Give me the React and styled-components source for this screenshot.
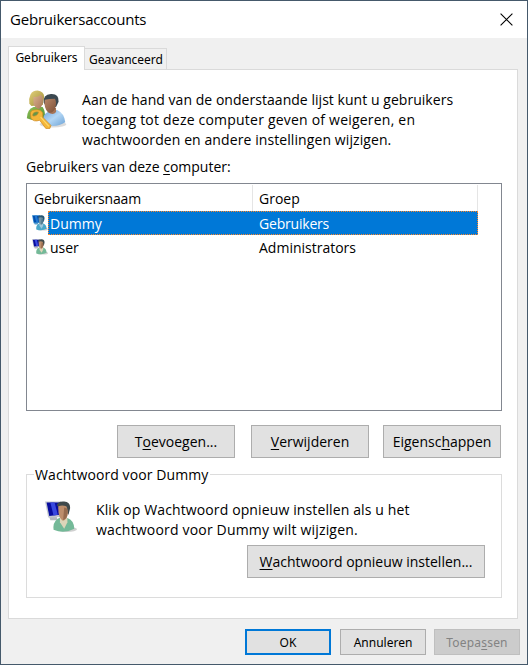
import React from "react";
import styled, { createGlobalStyle } from "styled-components";

const GlobalStyle = createGlobalStyle`
  * { box-sizing: border-box; }
  html, body { margin: 0; padding: 0; }
  body {
    background: #f0f0f0;
    color: #000;
    font-family: "Open Sans", "Noto Sans", sans-serif;
    font-size: 14px;
    line-height: 20px;
  }
  u { text-decoration: underline; text-decoration-thickness: 1px; text-underline-offset: 2px; text-decoration-skip-ink: none; }
`;

const Dialog = styled.main`
  width: 528px;
  height: 665px;
  border: 1px solid #45596b;
  background: #f0f0f0;
  display: flex;
  flex-direction: column;
`;

const TitleBar = styled.header`
  height: 37px;
  flex: none;
  background: #fff;
  display: flex;
  align-items: center;
  justify-content: space-between;
  padding: 0 14px 0 9px;
`;

const Title = styled.h1`
  margin: 0;
  padding-bottom: 2px;
  font-size: 15px;
  font-weight: 400;
  line-height: 20px;
  letter-spacing: -0.2px;
`;

const Text = styled.span`
  white-space: nowrap;
  letter-spacing: ${(p) => p.$track || 0}px;
`;

const CloseButton = styled.button`
  border: 0;
  padding: 0;
  background: none;
  width: 13px;
  height: 13px;
  display: flex;
`;

const TabStrip = styled.nav`
  height: 31px;
  flex: none;
  padding-left: 7px;
  display: flex;
  align-items: flex-end;
`;

const Tab = styled.button`
  font: 12px/18px "Noto Sans", sans-serif;
  color: #000;
  padding: ${(p) => (p.$active ? "0 0 2px" : "1px 0 0 1px")};
  border: 1px solid #dadada;
  border-bottom: 0;
  width: ${(p) => p.$width}px;
  height: ${(p) => (p.$active ? 24 : 21)}px;
  background: ${(p) => (p.$active ? "#fff" : "#f0f0f0")};
  margin-bottom: ${(p) => (p.$active ? -1 : 0)}px;
  margin-left: ${(p) => (p.$active ? 0 : -1)}px;
  position: relative;
  z-index: ${(p) => (p.$active ? 1 : 0)};
`;

const Pane = styled.section`
  margin-left: 7px;
  width: 510px;
  height: 550px;
  flex: none;
  border: 1px solid #dadada;
  background: #fff;
  padding: 20px 15px 0 17px;
  display: flex;
  flex-direction: column;
`;

const Intro = styled.div`
  display: flex;
  height: 67px;
`;

const IntroIcon = styled.div`
  width: 56px;
  flex: none;
  svg { display: block; }
`;

const Lines = styled.p`
  margin: 0;
  display: flex;
  flex-direction: column;
`;

const ListLabel = styled.label`
  height: 26px;
`;

const UserList = styled.div`
  height: 228px;
  flex: none;
  border: 1px solid #828790;
  display: flex;
  flex-direction: column;
`;

const ListHeader = styled.div`
  display: grid;
  grid-template-columns: 226px 225px;
  height: 27px;
  padding-top: 1px;
`;

const HeaderCell = styled.div`
  border-right: 1px solid #e5e5e5;
  padding: 4px 0 0 ${(p) => p.$indent}px;
`;

const Row = styled.div`
  display: flex;
  height: 24px;
  width: 451px;
`;

const RowIcon = styled.div`
  width: 21px;
  padding: 4px 0 0 5px;
  flex: none;
  svg { display: block; }
`;

const RowBody = styled.div`
  flex: 1;
  display: grid;
  grid-template-columns: 209px 1fr;
  padding: 2px 0 0 1px;
  line-height: 20px;
  border: 1px ${(p) => (p.$selected ? "dotted #ff8728" : "solid transparent")};
  background: ${(p) => (p.$selected ? "#0078d7" : "transparent")};
  color: ${(p) => (p.$selected ? "#fff" : "#000")};
`;

const ListActions = styled.div`
  display: flex;
  justify-content: flex-end;
  padding: 14px 1px 0 0;
  height: 54px;
  button + button { margin-left: 16px; }
  button:last-child { margin-left: 14px; }
`;

const Button = styled.button`
  font: ${(p) => (p.$small ? '12px "Noto Sans"' : '14px "Open Sans"')}, sans-serif;
  line-height: 20px;
  width: ${(p) => p.$width}px;
  height: ${(p) => (p.$small ? 26 : 33)}px;
  padding: ${(p) => (p.$small ? "1px 0 0" : "0")};
  flex: none;
  color: ${(p) => (p.disabled ? "#838383" : "#000")};
  background: ${(p) => (p.disabled ? "#cccccc" : "#e1e1e1")};
  border: ${(p) => (p.$primary ? "2px solid #0078d7" : p.disabled ? "1px solid #bfbfbf" : "1px solid #adadad")};
`;

const Group = styled.section`
  height: 133px;
  flex: none;
  display: flex;
  flex-direction: column;
`;

const GroupTop = styled.div`
  display: flex;
  height: 20px;
  align-items: flex-start;
  &::before, &::after {
    content: "";
    height: 11px;
    margin-top: 9px;
    border-top: 1px solid #dcdcdc;
  }
  &::before { width: 7px; border-left: 1px solid #dcdcdc; margin-right: 1px; }
  &::after { flex: 1; border-right: 1px solid #dcdcdc; margin-left: 2px; }
`;

const GroupBody = styled.div`
  flex: 1;
  border: 1px solid #dcdcdc;
  border-top: 0;
  padding: 15px 16px 0 17px;
`;

const GroupInfo = styled.div`
  display: flex;
  height: 45px;
`;

const GroupIcon = styled.div`
  width: 52px;
  padding: 1px 0 0 1px;
  flex: none;
  svg { display: block; }
`;

const GroupAction = styled.div`
  display: flex;
  justify-content: flex-end;
`;

const Footer = styled.footer`
  display: flex;
  padding: 10px 7px 0 0;
  justify-content: flex-end;
  button { margin-left: 9px; }
  button:last-child { margin-left: 8px; }
`;

const KeyUsersIcon = () => (
  <svg width="41" height="40" viewBox="0.7 0.5 40 39">
    <defs>
      <linearGradient id="hair" x2="1" y2="1"><stop stopColor="#e3d27c" /><stop offset="1" stopColor="#9d8a35" /></linearGradient>
      <linearGradient id="green" x2="1" y2="1"><stop stopColor="#8fc159" /><stop offset="1" stopColor="#4f8d30" /></linearGradient>
      <linearGradient id="blue" x2="1" y2="1"><stop stopColor="#6fa3d8" /><stop offset=".5" stopColor="#b3d6f4" /><stop offset="1" stopColor="#6ba2d6" /></linearGradient>
      <linearGradient id="skinA" x2="1" y2="1"><stop stopColor="#d9b08e" /><stop offset="1" stopColor="#a87757" /></linearGradient>
      <linearGradient id="skinB" x2="1" y2="1"><stop stopColor="#b98667" /><stop offset="1" stopColor="#7d5138" /></linearGradient>
    </defs>
    <ellipse cx="27" cy="34" rx="13" ry="3" fill="#888" opacity=".3" />
    <path d="M1.500 28Q2 19 8 17L17 17Q20 22 19 28Q10 32 1.500 28Z" fill="url(#green)" />
    <path d="M4 14Q3 9 5 5Q7 1 12 1Q18 2 18.500 7L17 15L6 16Z" fill="url(#hair)" />
    <path d="M8 7Q12 8 15 5Q18 7 17 13Q16 18 13 19Q9 18 8 14Z" fill="url(#skinA)" />
    <path d="M17.500 33Q16 25 22 22L31 20Q38 23 39 32Q30 38 18 34Z" fill="url(#blue)" />
    <path d="M22 18H30V22Q27 26 22 22Z" fill="#a77455" />
    <path d="M18 13Q17 5 25 4.500Q33 4 32.500 12L30 17L20 16Z" fill="#3b4850" />
    <path d="M19 10Q23 9 29 9Q31 13 29 19Q26 24 22 22Q18 18 19 10Z" fill="url(#skinB)" />
    <path d="M5 24Q5 20 9 20Q15 19 17 23L17 27L25 35L24 38L20 38L14 30Q8 32 5.500 28Z" fill="#f4b63a" stroke="#d08a22" strokeWidth=".7" />
    <path d="M7 25Q8 21 13 22Q12 26 8 26Z" fill="#64964a" stroke="#d48e25" strokeWidth=".6" />
    <path d="M15 27L23 36" stroke="#ffda6d" strokeWidth="1" />
  </svg>
);

const MonitorUserIcon = ({ size = 31, selected = false }) => (
  <svg width={size} height={size} viewBox="0 0 30 30">
    <ellipse cx="20.500" cy="26.500" rx="9.500" ry="2.500" fill="#777" opacity=".35" />
    <path d="M4 15L11 15L12 18L5 18Z" fill={selected ? "#5b9dca" : "#b4b9bd"} />
    <path d="M0 .5L15 .5V15L3 15.500Z" fill={selected ? "#3b94d5" : "#c3c8cf"} />
    <path d="M1.500 1.500L14 1.500V13L4 14Z" fill={selected ? "#034eae" : "#080d9f"} />
    <path d="M5 1.500H9L12 13L8 13.500Z" fill={selected ? "#1e78d2" : "#3848df"} />
    <path d="M8 26Q7 19 14 15.500L21 16Q27 18 27.500 26Q18 31 8 27Z" fill={selected ? "#4aa8c9" : "#74b998"} />
    <path d="M14 16L21 16L21 20L18 26L14 20Z" fill={selected ? "#a0c8dc" : "#ded5b9"} />
    <path d="M11 4Q12 0 18 .5Q24 1 23.500 7L22 13L19 10L13 6Z" fill={selected ? "#285875" : "#3f494b"} />
    <path d="M12.500 5Q16 3.500 20 5Q22 9 21 14Q19 19 16 18Q12 15 12.500 5Z" fill={selected ? "#7193a3" : "#bd8e6c"} />
    <path d="M18 6L20.500 7Q22 12 20 16L17 18Z" fill={selected ? "#4f7890" : "#966b4e"} />
  </svg>
);

const CloseIcon = () => (
  <svg width="13" height="13" viewBox="0 0 13 13">
    <path d="M.6.6L12.4 12.4M12.4.6L.6 12.4" stroke="#000" strokeWidth="1.1" />
  </svg>
);

const users = [
  { name: "Dummy", group: "Gebruikers", track: -0.2, selected: true },
  { name: "user", group: "Administrators", track: 0, selected: false },
];

export default function App() {
  return (
    <>
      <GlobalStyle />
      <Dialog>
        <TitleBar>
          <Title>Gebruikersaccounts</Title>
          <CloseButton aria-label="Sluiten"><CloseIcon /></CloseButton>
        </TitleBar>
        <TabStrip>
          <Tab $active $width={77}><Text>Gebruikers</Text></Tab>
          <Tab $width={83}><Text>Geavanceerd</Text></Tab>
        </TabStrip>
        <Pane>
          <Intro>
            <IntroIcon><KeyUsersIcon /></IntroIcon>
            <Lines>
              <Text $track={0.04}>Aan de hand van de onderstaande lijst kunt u gebruikers</Text>
              <Text $track={0.21}>toegang tot deze computer geven of weigeren, en</Text>
              <Text $track={0.09}>wachtwoorden en andere instellingen wijzigen.</Text>
            </Lines>
          </Intro>
          <ListLabel><Text>Gebruikers van deze <u>c</u>omputer:</Text></ListLabel>
          <UserList>
            <ListHeader>
              <HeaderCell $indent={7}><Text $track={-0.15}>Gebruikersnaam</Text></HeaderCell>
              <HeaderCell $indent={6}><Text>Groep</Text></HeaderCell>
            </ListHeader>
            {users.map((u) => (
              <Row key={u.name}>
                <RowIcon><MonitorUserIcon size={16} selected={u.selected} /></RowIcon>
                <RowBody $selected={u.selected}>
                  <Text>{u.name}</Text>
                  <Text $track={u.track}>{u.group}</Text>
                </RowBody>
              </Row>
            ))}
          </UserList>
          <ListActions>
            <Button $width={118}><Text>T<u>o</u>evoegen...</Text></Button>
            <Button $width={118}><Text><u>V</u>erwijderen</Text></Button>
            <Button $width={118}><Text>Eigensc<u>h</u>appen</Text></Button>
          </ListActions>
          <Group aria-label="Wachtwoord voor Dummy">
            <GroupTop><Text $track={0.09}>Wachtwoord voor Dummy</Text></GroupTop>
            <GroupBody>
              <GroupInfo>
                <GroupIcon><MonitorUserIcon size={32} /></GroupIcon>
                <Lines>
                  <Text $track={0.12}>Klik op Wachtwoord opnieuw instellen als u het</Text>
                  <Text $track={0.18}>wachtwoord voor Dummy wilt wijzigen.</Text>
                </Lines>
              </GroupInfo>
              <GroupAction>
                <Button $width={238}><Text><u>W</u>achtwoord opnieuw instellen...</Text></Button>
              </GroupAction>
            </GroupBody>
          </Group>
        </Pane>
        <Footer>
          <Button $small $primary $width={86}><Text>OK</Text></Button>
          <Button $small $width={86}><Text>Annuleren</Text></Button>
          <Button $small disabled $width={86}><Text $track={0.2}>Toepa<u>s</u>sen</Text></Button>
        </Footer>
      </Dialog>
    </>
  );
}
